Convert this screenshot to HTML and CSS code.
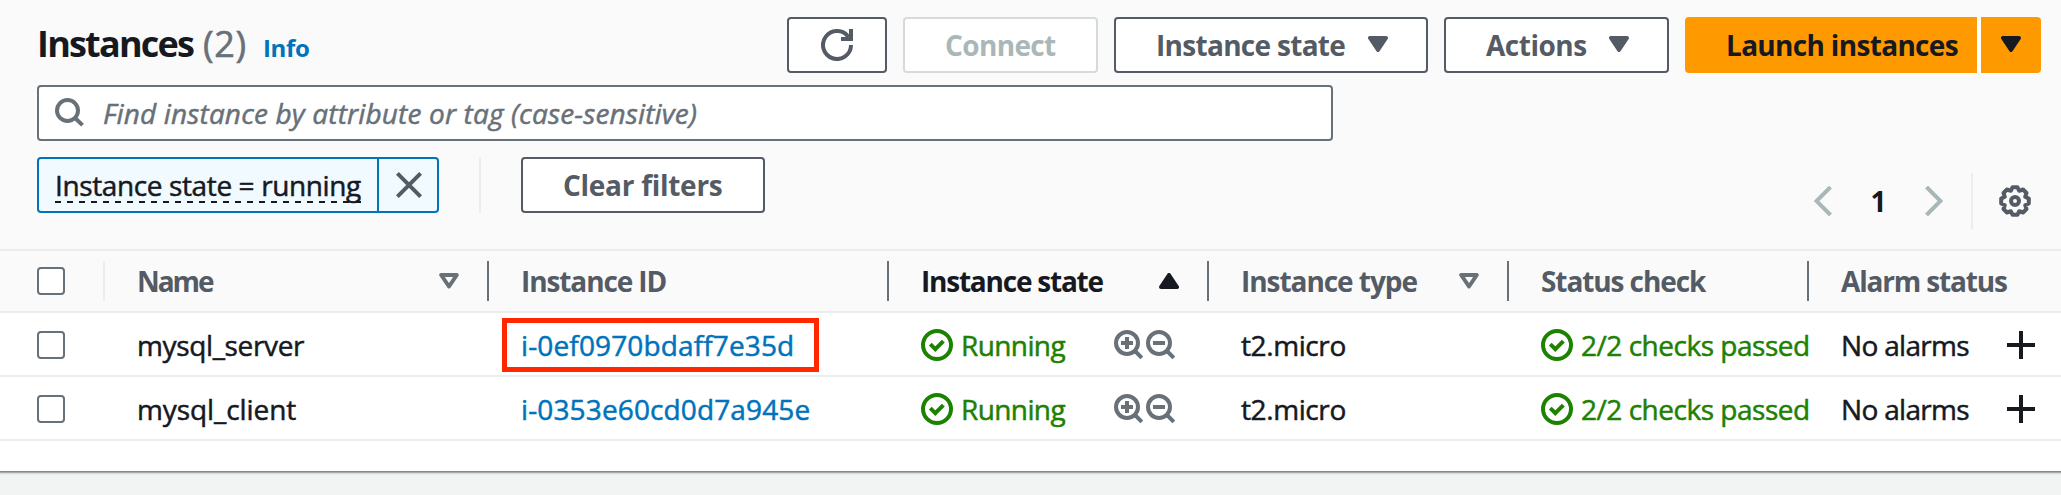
FILE: index.html
```
<!DOCTYPE html>
<html lang="en">
<head>
<meta charset="utf-8">
<title>Instances</title>
<link rel="stylesheet" href="styles.css">
</head>
<body>
<svg class="sprite" aria-hidden="true">
  <symbol id="caret" viewBox="0 0 20 16"><path d="M2 2h16l-8 12z" fill="currentColor" stroke="currentColor" stroke-width="4" stroke-linejoin="round"/></symbol>
  <symbol id="sort" viewBox="0 0 20 16"><path d="M2.2 2h15.6L10 13.5z" fill="none" stroke="currentColor" stroke-width="4" stroke-linejoin="round"/></symbol>
  <symbol id="ok" viewBox="0 0 32 32"><g fill="none" stroke="currentColor" stroke-width="4"><circle cx="16" cy="16" r="14"/><path d="M9.3 15.2l5 5 8-8"/></g></symbol>
  <symbol id="zoom-in" viewBox="0 0 30 30"><g fill="none" stroke="currentColor" stroke-width="4"><circle cx="13" cy="13" r="11"/><path d="M20.5 20.5l7.3 7.3M7 13h12M13 7v12"/></g></symbol>
  <symbol id="zoom-out" viewBox="0 0 30 30"><g fill="none" stroke="currentColor" stroke-width="4"><circle cx="13" cy="13" r="11"/><path d="M20.5 20.5l7.3 7.3M7 13h12"/></g></symbol>
  <symbol id="plus" viewBox="0 0 28 28"><path d="M0 14h28M14 0v28" fill="none" stroke="currentColor" stroke-width="4"/></symbol>
</svg>
<main class="panel">
  <header class="header">
    <div class="title-row">
      <h1 class="title">Instances</h1><span class="count">(2)</span><a class="info">Info</a>
      <div class="actions">
        <button class="btn refresh" aria-label="Refresh"><svg width="32" height="32" viewBox="0 0 32 32"><g fill="none" stroke="currentColor" stroke-width="4"><path d="M30 16A14 14 0 1 1 27.500 8"/><path d="M30 0v10H20"/></g></svg></button>
        <button class="btn connect">Connect</button>
        <button class="btn state">Instance state<svg class="tri"><use href="#caret"/></svg></button>
        <button class="btn menu">Actions<svg class="tri"><use href="#caret"/></svg></button>
        <div class="split">
          <button class="primary launch">Launch instances</button>
          <button class="primary more" aria-label="More"><svg class="tri"><use href="#caret"/></svg></button>
        </div>
      </div>
    </div>
    <div class="search">
      <svg width="30" height="30" viewBox="0 0 30 30"><g fill="none" stroke="currentColor" stroke-width="4"><circle cx="12.5" cy="12.5" r="10.5"/><path d="M19.5 19.5l8 7.6"/></g></svg>
      <span class="placeholder">Find instance by attribute or tag (case-sensitive)</span>
    </div>
    <div class="filters">
      <div class="token"><span class="token-label"><span class="token-text">Instance state = running</span></span><span class="token-close"><svg width="26" height="26" viewBox="0 0 26 26"><path d="M1.4 1.4l23.2 23.2M24.6 1.4L1.4 24.6" fill="none" stroke="currentColor" stroke-width="4"/></svg></span></div>
      <span class="rule"></span>
      <button class="btn clear">Clear filters</button>
      <div class="pager">
        <svg class="chev" viewBox="0 0 18 30"><path d="M16.5 1L2.500 15l14 14" fill="none" stroke="currentColor" stroke-width="4"/></svg>
        <span class="page">1</span>
        <svg class="chev" viewBox="0 0 18 30"><path d="M1.5 1l14 14-14 14" fill="none" stroke="currentColor" stroke-width="4"/></svg>
        <span class="rule"></span>
        <svg class="gear" viewBox="0 0 32 32"><g fill="none" stroke="currentColor" stroke-width="4" stroke-linejoin="round"><path d="M13.6 2.200L18.400 2.200 20.200 5.800 24 4.500 27.500 8 26.200 11.800 29.800 13.600 29.800 18.400 26.200 20.200 27.500 24 24 27.500 20.200 26.200 18.400 29.800 13.600 29.800 11.800 26.200 8 27.500 4.500 24 5.800 20.200 2.200 18.400 2.200 13.600 5.800 11.800 4.500 8 8 4.500 11.800 5.800z"/><circle cx="16" cy="16" r="4"/></g></svg>
      </div>
    </div>
  </header>
  <div class="row head">
    <div class="cell"><span class="box"></span></div>
    <div class="cell c-name">Name<svg class="tri dim"><use href="#sort"/></svg></div>
    <div class="cell c-id">Instance ID</div>
    <div class="cell c-state">Instance state<svg class="tri up"><use href="#caret"/></svg></div>
    <div class="cell c-type">Instance type<svg class="tri dim"><use href="#sort"/></svg></div>
    <div class="cell c-check">Status check</div>
    <div class="cell c-alarm">Alarm status</div>
  </div>
  <div class="row item">
    <div class="cell"><span class="box"></span></div>
    <div class="cell v-server">mysql_server</div>
    <div class="cell link v-id"><span class="marked">i-0ef0970bdaff7e35d</span></div>
    <div class="cell good v-state"><svg class="ok"><use href="#ok"/></svg>Running<span class="zooms"><svg class="z"><use href="#zoom-in"/></svg><svg class="z"><use href="#zoom-out"/></svg></span></div>
    <div class="cell v-type">t2.micro</div>
    <div class="cell good v-check"><svg class="ok"><use href="#ok"/></svg>2/2 checks passed</div>
    <div class="cell v-alarm">No alarms<svg class="plus"><use href="#plus"/></svg></div>
  </div>
  <div class="row item">
    <div class="cell"><span class="box"></span></div>
    <div class="cell v-client">mysql_client</div>
    <div class="cell link v-id">i-0353e60cd0d7a945e</div>
    <div class="cell good v-state"><svg class="ok"><use href="#ok"/></svg>Running<span class="zooms"><svg class="z"><use href="#zoom-in"/></svg><svg class="z"><use href="#zoom-out"/></svg></span></div>
    <div class="cell v-type">t2.micro</div>
    <div class="cell good v-check"><svg class="ok"><use href="#ok"/></svg>2/2 checks passed</div>
    <div class="cell v-alarm">No alarms<svg class="plus"><use href="#plus"/></svg></div>
  </div>
</main>
</body>
</html>
```
FILE: styles.css
```
*, *::after { box-sizing: border-box; }
body {
  margin: 0;
  height: 495px;
  overflow: hidden;
  background: #f2f3f3;
  color: #16191f;
  font: 28px/40px "Open Sans", "Noto Sans", sans-serif;
}
svg { flex: none; display: block; }
.sprite { position: absolute; width: 0; height: 0; }
.panel {
  height: 471px;
  background: #fff;
  box-shadow: 0 1px 0 #808a8e, 0 2px 0 #a3acae, 0 3px 1px #d5dbdb;
}
.header {
  height: 249px;
  padding: 17px 20px 0 37px;
  background: #fafafa;
}
.title-row { display: flex; height: 56px; }
.title { margin: 0; width: 166px; font-size: 36px; line-height: 54px; letter-spacing: -1.79px; white-space: nowrap; }
.count { width: 60px; font-size: 36px; line-height: 54px; color: #687078; letter-spacing: .65px; -webkit-text-stroke: .6px; }
.info { font-size: 24px; font-weight: 700; line-height: 62px; color: #0073bb; letter-spacing: -.34px; }
.actions { display: flex; gap: 16px; margin-left: auto; }
.btn, .primary {
  display: flex;
  align-items: center;
  height: 56px;
  padding: 0 0 1px;
  border: 2px solid #545b64;
  border-radius: 4px;
  background: #fff;
  color: #545b64;
  font: bold 28px/40px "Open Sans", "Noto Sans", sans-serif;
  white-space: nowrap;
}
.tri { width: 20px; height: 16px; margin-bottom: 1px; }
.refresh { width: 100px; padding: 0 0 0 32px; }
.connect { width: 195px; padding-left: 40px; border-color: #d5dbdb; color: #aab7b8; letter-spacing: -.65px; }
.state { width: 314px; padding: 0 38px 1px 40px; justify-content: space-between; letter-spacing: -.7px; }
.menu { width: 225px; padding: 0 38px 1px 40px; justify-content: space-between; letter-spacing: -.49px; }
.split { display: flex; gap: 4px; background: #fff; border-radius: 4px; }
.primary { border: 0; background: #f90; color: #16191f; }
.launch { width: 292px; padding-left: 41px; border-radius: 4px 0 0 4px; letter-spacing: -.68px; }
.more { width: 60px; padding-left: 20px; border-radius: 0 4px 4px 0; }
.search {
  display: flex;
  align-items: center;
  width: 1296px;
  height: 56px;
  margin-top: 12px;
  padding-left: 16px;
  border: 2px solid #687078;
  border-radius: 4px;
  background: #fff;
  color: #687078;
}
.placeholder { margin-left: 18px; font-style: italic; letter-spacing: .15px; -webkit-text-stroke: .5px; }
.filters { display: flex; margin-top: 16px; height: 72px; }
.token {
  display: flex;
  width: 402px;
  height: 56px;
  border: 2px solid #0073bb;
  border-radius: 4px;
  background: #f1faff;
}
.token-label { width: 338px; padding: 8px 0 0 16px; }
.token-text {
  display: block;
  width: 306px;
  height: 36px;
  line-height: 36px;
  letter-spacing: -.38px;
  white-space: nowrap;
  -webkit-text-stroke: .5px;
  background: repeating-linear-gradient(90deg, #16191f 0 6px, transparent 6px 12px) 0 100% / 100% 2px no-repeat;
}
.token-close { width: 60px; padding: 13px 0 0 17px; border-left: 2px solid #0073bb; color: #545b64; }
.rule { width: 2px; height: 56px; background: #eaeded; }
.token + .rule { margin: 0 40px; }
.clear { width: 244px; padding-left: 40px; letter-spacing: -.28px; }
.pager { display: flex; align-items: center; height: 56px; margin: 16px 10px 0 auto; }
.chev { width: 18px; height: 30px; color: #aab7b8; }
.page { width: 93px; text-align: center; font-weight: 700; }
.pager .rule { margin: 0 26px 0 28px; }
.gear { width: 32px; height: 32px; color: #545b64; }
.row { display: grid; grid-template-columns: 105px 384px 400px 320px 300px 300px 252px; }
.head {
  height: 64px;
  border: solid #eaeded;
  border-width: 2px 0;
  background: #fafafa;
  color: #545b64;
  font-weight: 700;
}
.cell { display: flex; align-items: center; padding-left: 32px; white-space: nowrap; }
.cell:first-child { padding-left: 37px; }
.head .cell {
  background: linear-gradient(#687078, #687078) 100% 10px / 2px 40px no-repeat;
}
.head .cell:first-child { background-image: linear-gradient(#eaeded, #eaeded); }
.head .cell:last-child { background: none; }
.head .tri { margin: 0 30px 0 auto; }
.dim { color: #687078; }
.up { transform: rotate(180deg); }
.box { width: 28px; height: 28px; border: 2px solid #687078; border-radius: 4px; background: #fff; }
.c-name { letter-spacing: -2.06px; }
.c-id { letter-spacing: -1.1px; }
.c-state { letter-spacing: -1.22px; color: #16191f; }
.c-type { letter-spacing: -1.05px; }
.c-check { letter-spacing: -1.09px; }
.c-alarm { letter-spacing: -1.16px; }
.item { height: 64px; padding-top: 2px; border-bottom: 2px solid #eaeded; -webkit-text-stroke: .5px; }
.link { color: #0073bb; }
.good { color: #1d8102; }
.v-server { letter-spacing: -.36px; }
.v-client { letter-spacing: -.08px; }
.v-id { letter-spacing: .13px; }
.marked { position: relative; }
.marked::after {
  content: "";
  position: absolute;
  left: -19px;
  top: -7px;
  width: 317px;
  height: 54px;
  border: 5px solid #ff2600;
}
.ok { width: 32px; height: 32px; margin-right: 8px; }
.v-state { letter-spacing: -.6px; }
.v-type { letter-spacing: -.4px; }
.v-check { letter-spacing: -.48px; }
.v-alarm { letter-spacing: -.68px; }
.zooms { display: flex; gap: 2px; margin: 0 33px 0 auto; color: #687078; }
.z { width: 30px; height: 30px; }
.plus { width: 28px; height: 28px; margin: 0 26px 0 auto; }
```
